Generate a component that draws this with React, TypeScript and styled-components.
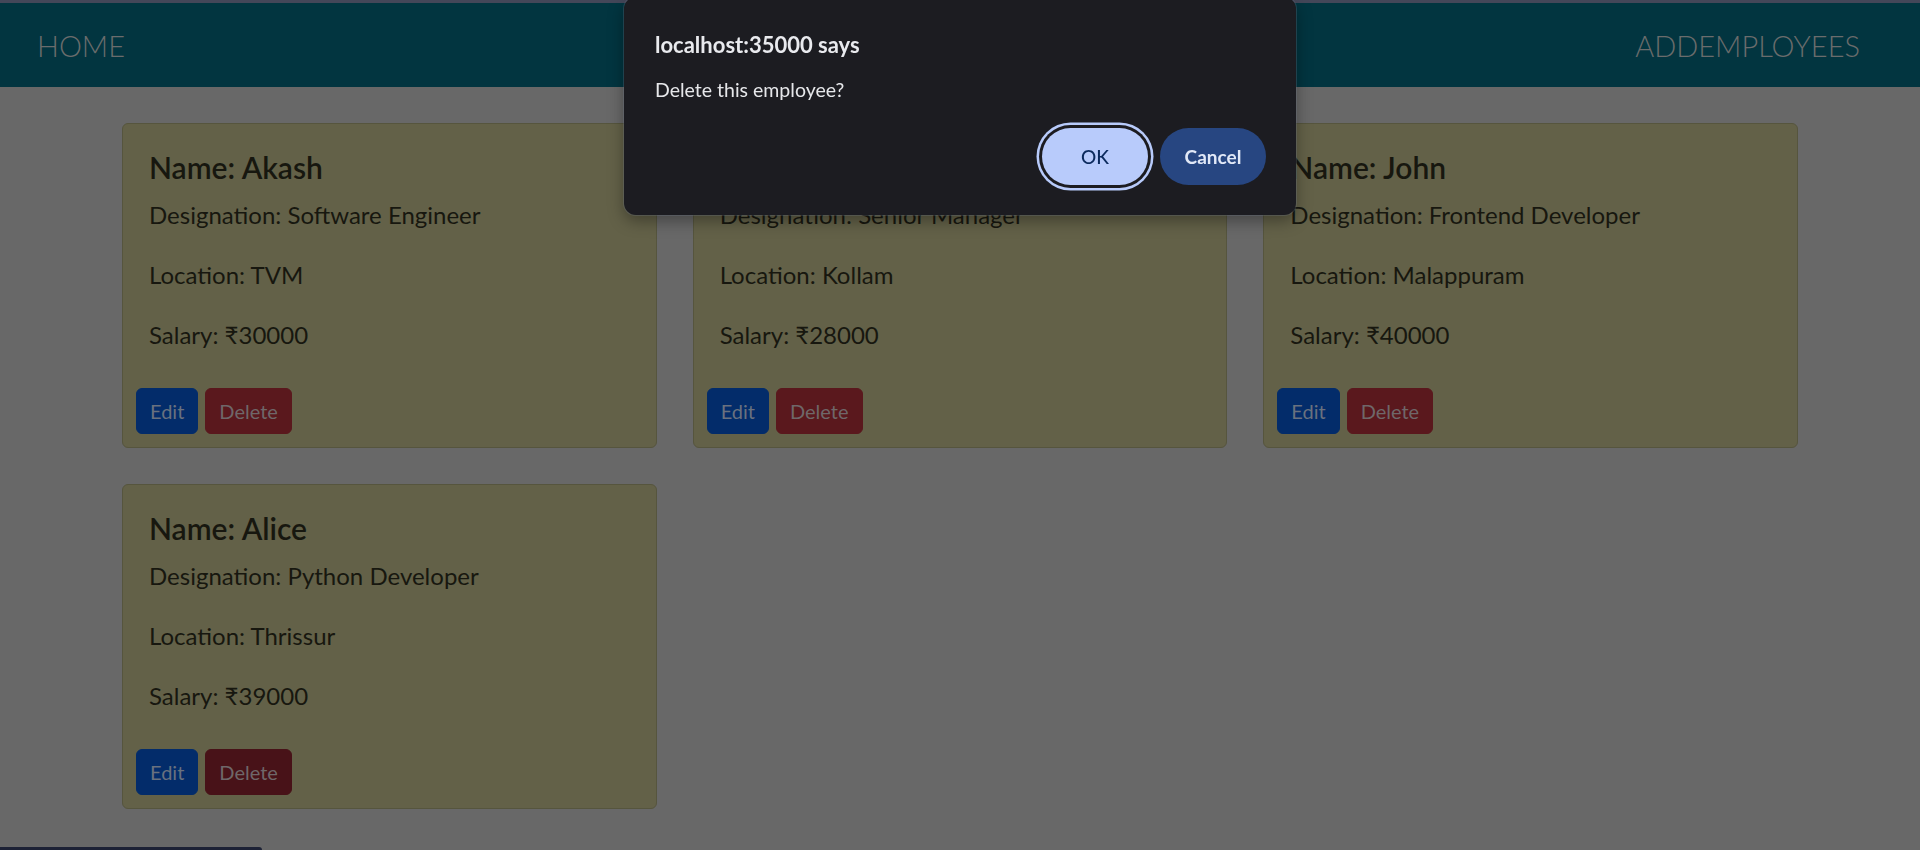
import React from "react";
import styled, { createGlobalStyle } from "styled-components";

const GlobalStyle = createGlobalStyle`
  html, body {
    margin: 0;
    padding: 0;
    background: #686868;
    min-height: 100%;
  }
  body {
    font-family: "Lato", "Noto Sans", "DejaVu Sans", sans-serif;
    overflow: hidden;
  }
  * { box-sizing: border-box; }
`;

const TopStrip = styled.div`
  height: 3px;
  background: #444759;
`;

const NavBar = styled.nav`
  height: 84px;
  background: #023540;
  display: flex;
  align-items: center;
  justify-content: space-between;
  padding: 0 60px 0 37px;
`;

const NavLink = styled.a`
  font-family: "Lato", "Noto Sans", sans-serif;
  font-size: 29px;
  font-weight: 300;
  color: #6a6c6c;
  text-decoration: none;
  letter-spacing: 0;
`;

const Main = styled.main`
  padding: 36px 122px;
  display: grid;
  grid-template-columns: repeat(3, 1fr);
  gap: 36px;
`;

const Card = styled.div`
  background: #636148;
  border: 1px solid #56553e;
  border-radius: 6px;
  padding: 13px;
  color: #17170f;
  display: flex;
  flex-direction: column;
`;

const Info = styled.div`
  padding: 12px 13px 0;
  display: flex;
  flex-direction: column;
`;

const Name = styled.h3`
  margin: 0 0 12px;
  font-size: 30px;
  line-height: 36px;
  font-weight: 600;
`;

const Field = styled.p`
  margin: 0 0 24px;
  font-size: 24px;
  line-height: 36px;
  font-weight: 400;
`;

const ButtonRow = styled.div`
  display: flex;
  gap: 7px;
  margin-top: 11px;
`;

const CardButton = styled.button<{ $variant: "edit" | "delete"; $active?: boolean }>`
  font-family: "Lato", "Noto Sans", sans-serif;
  font-size: 20px;
  line-height: 30px;
  padding: 7px 13px;
  border-radius: 6px;
  border: 1px solid
    ${(p) => (p.$variant === "edit" ? "#032c6a" : p.$active ? "#481218" : "#5a181d")};
  background: ${(p) => (p.$variant === "edit" ? "#032c6a" : p.$active ? "#481218" : "#5a181d")};
  color: ${(p) => (p.$variant === "edit" ? "#69717f" : "#6f6769")};
  cursor: pointer;
`;

const Dialog = styled.div`
  position: fixed;
  top: -3px;
  left: 624px;
  width: 672px;
  height: 218px;
  background: #1c1c21;
  border-radius: 12px;
  box-shadow: 0 0 0 1px rgba(120, 130, 150, 0.25), 0 6px 16px rgba(0, 0, 0, 0.35);
  padding: 34px 30px 30px 31px;
  display: flex;
  flex-direction: column;
  font-family: "Lato", "Noto Sans", sans-serif;
`;

const DialogTitle = styled.div`
  font-size: 22px;
  line-height: 28px;
  font-weight: 700;
  color: #e9eaee;
`;

const DialogMessage = styled.div`
  margin-top: 18px;
  font-size: 19.5px;
  line-height: 26px;
  color: #e6e7ea;
`;

const DialogActions = styled.div`
  margin-top: 25px;
  display: flex;
  justify-content: flex-end;
  gap: 12px;
`;

const DialogButton = styled.button<{ $primary?: boolean }>`
  width: 106px;
  height: 57px;
  border-radius: 29px;
  border: none;
  font-family: "Lato", "Noto Sans", sans-serif;
  font-size: 19px;
  cursor: pointer;
  background: ${(p) => (p.$primary ? "#b8cbfb" : "#274681")};
  color: ${(p) => (p.$primary ? "#0b2a5d" : "#e1e8f7")};
  font-weight: ${(p) => (p.$primary ? 500 : 700)};
  box-shadow: ${(p) => (p.$primary ? "0 0 0 3px #1c1c21, 0 0 0 5.5px #b8cbfb" : "none")};
`;

const BottomTab = styled.div`
  position: fixed;
  left: 0;
  bottom: 0;
  width: 262px;
  height: 3px;
  background: #1d2236;
  border-top-right-radius: 6px;
`;

type Employee = {
  name: string;
  designation: string;
  location: string;
  salary: number;
};

const employees: Employee[] = [
  { name: "Akash", designation: "Software Engineer", location: "TVM", salary: 30000 },
  { name: "Rahul", designation: "Senior Manager", location: "Kollam", salary: 28000 },
  { name: "John", designation: "Frontend Developer", location: "Malappuram", salary: 40000 },
  { name: "Alice", designation: "Python Developer", location: "Thrissur", salary: 39000 },
];

export default function App() {
  return (
    <>
      <GlobalStyle />
      <TopStrip />
      <NavBar>
        <NavLink href="#">HOME</NavLink>
        <NavLink href="#">ADDEMPLOYEES</NavLink>
      </NavBar>
      <Main>
        {employees.map((e, i) => (
          <Card key={e.name}>
            <Info>
              <Name>Name: {e.name}</Name>
              <Field>Designation: {e.designation}</Field>
              <Field>Location: {e.location}</Field>
              <Field>Salary: ₹{e.salary}</Field>
            </Info>
            <ButtonRow>
              <CardButton $variant="edit">Edit</CardButton>
              <CardButton $variant="delete" $active={i === 3}>
                Delete
              </CardButton>
            </ButtonRow>
          </Card>
        ))}
      </Main>
      <Dialog role="alertdialog">
        <DialogTitle>localhost:35000 says</DialogTitle>
        <DialogMessage>Delete this employee?</DialogMessage>
        <DialogActions>
          <DialogButton $primary>OK</DialogButton>
          <DialogButton>Cancel</DialogButton>
        </DialogActions>
      </Dialog>
      <BottomTab />
    </>
  );
}
